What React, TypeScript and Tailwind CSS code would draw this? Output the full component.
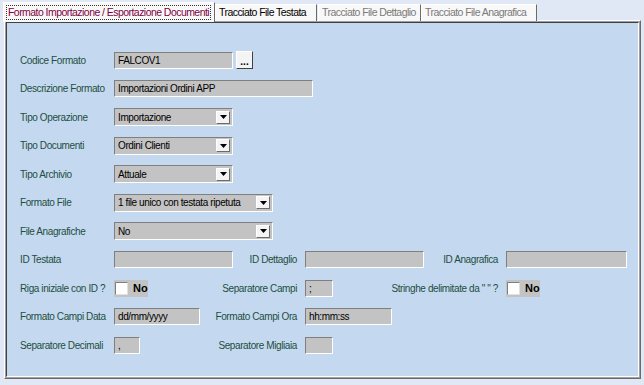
import React from 'react';

const FONT = { fontFamily: '"Liberation Sans", Arial, sans-serif' };

const Label: React.FC<{ text: string; className?: string }> = ({ text, className }) => (
  <span className={`text-[10px] tracking-[-0.4px] text-[#1f4d42] whitespace-nowrap ${className ?? ''}`}>{text}</span>
);

const TextBox: React.FC<{ value?: string; w: string }> = ({ value, w }) => (
  <div
    className={`${w} h-[17px] bg-[#c3c3c3] border border-t-[#7f7f7f] border-l-[#7f7f7f] border-b-white border-r-white px-[3px] text-[10px] tracking-[-0.4px] leading-[15px] text-black whitespace-nowrap overflow-hidden`}
  >
    {value}
  </div>
);

const Combo: React.FC<{ value: string; w: string }> = ({ value, w }) => (
  <div
    className={`${w} h-[18px] bg-[#c3c3c3] border border-t-[#7f7f7f] border-l-[#7f7f7f] border-b-white border-r-white flex items-center`}
  >
    <span className="flex-1 px-[3px] text-[10px] tracking-[-0.4px] leading-[15px] text-black whitespace-nowrap">{value}</span>
    <div className="w-[14px] h-[13px] mr-[2px] bg-[#f4f4f4] border border-t-white border-l-white border-b-[#6b6b6b] border-r-[#6b6b6b] flex items-center justify-center">
      <svg width="7" height="4" viewBox="0 0 7 4">
        <path d="M0 0h7L3.5 4z" fill="#000" />
      </svg>
    </div>
  </div>
);

const CheckNo: React.FC = () => (
  <div className="w-[34px] h-[17px] bg-[#c3c3c3] flex items-center">
    <div className="w-[13px] h-[13px] ml-[1px] bg-white border border-t-[#7f7f7f] border-l-[#7f7f7f] border-b-[#e0e0e0] border-r-[#e0e0e0]" />
    <span className="ml-[5px] text-[11px] font-bold text-black">No</span>
  </div>
);

const Row: React.FC<{ children: React.ReactNode }> = ({ children }) => (
  <div className="h-[28.5px] flex items-center">{children}</div>
);

const tabText = 'text-[10.5px] tracking-[-0.55px] whitespace-nowrap';

const App: React.FC = () => {
  return (
    <div className="w-[644px] h-[385px] bg-[#dfe8f4] pt-[2px] pl-[3px]" style={FONT}>
      {/* tabs */}
      <div className="flex items-start h-[19px] relative z-10">
        <div className="w-[212px] h-[20px] bg-[#f8f8f8] border border-b-0 border-t-white border-l-white border-r-[#6b6b6b] flex items-center px-[2px] overflow-hidden">
          <span className={`border border-dotted border-[#333] px-[1px] leading-[13px] text-[#800040] ${tabText}`}>
            Formato Importazione / Esportazione Documenti
          </span>
        </div>
        <div className={`mt-[2px] w-[102px] h-[17px] bg-[#f8f8f8] border border-b-0 border-t-white border-l-white border-r-[#6b6b6b] flex items-center pl-[3px] text-black ${tabText}`}>
          Tracciato File Testata
        </div>
        <div className={`mt-[2px] ml-[1px] w-[103px] h-[17px] bg-[#f8f8f8] border border-b-0 border-t-white border-l-white border-r-[#6b6b6b] flex items-center pl-[3px] text-[#7a7a7a] ${tabText}`}>
          Tracciato File Dettaglio
        </div>
        <div className={`mt-[2px] w-[116px] h-[17px] bg-[#f8f8f8] border border-b-0 border-t-white border-l-white border-r-[#6b6b6b] flex items-center pl-[3px] text-[#7a7a7a] ${tabText}`}>
          Tracciato File Anagrafica
        </div>
      </div>

      {/* panel */}
      <div className="ml-[1px] -mt-[1px] w-[637px] h-[359px] border border-t-white border-l-white border-b-[#6b6b6b] border-r-[#6b6b6b]">
        <div className="w-full h-full border border-t-[#a0a0a0] border-l-[#a0a0a0] border-b-[#a0a0a0] border-r-[#a0a0a0]">
          <div className="w-full h-full bg-[#c4d9ef] border border-t-[#404040] border-l-[#404040] border-b-white border-r-white pt-[23px] pl-[13px]">
            <Row>
              <Label text="Codice Formato" className="w-[94px]" />
              <TextBox value="FALCOV1" w="w-[119px]" />
              <div className="ml-[3px] w-[17px] h-[18px] bg-[#f4f4f4] border border-t-white border-l-white border-b-[#404040] border-r-[#404040] flex items-end justify-center pb-[3px] text-[10px] leading-[6px] font-bold text-black">
                ...
              </div>
            </Row>
            <Row>
              <Label text="Descrizione Formato" className="w-[94px]" />
              <TextBox value="Importazioni Ordini APP" w="w-[199px]" />
            </Row>
            <Row>
              <Label text="Tipo Operazione" className="w-[94px]" />
              <Combo value="Importazione" w="w-[119px]" />
            </Row>
            <Row>
              <Label text="Tipo Documenti" className="w-[94px]" />
              <Combo value="Ordini Clienti" w="w-[119px]" />
            </Row>
            <Row>
              <Label text="Tipo Archivio" className="w-[94px]" />
              <Combo value="Attuale" w="w-[119px]" />
            </Row>
            <Row>
              <Label text="Formato File" className="w-[94px]" />
              <Combo value="1 file unico con testata ripetuta" w="w-[159px]" />
            </Row>
            <Row>
              <Label text="File Anagrafiche" className="w-[94px]" />
              <Combo value="No" w="w-[159px]" />
            </Row>
            <Row>
              <Label text="ID Testata" className="w-[94px]" />
              <div className="w-[183px] flex items-center justify-between">
                <TextBox w="w-[119px]" />
                <Label text="ID Dettaglio" />
              </div>
              <div className="ml-[8px] w-[193px] flex items-center justify-between">
                <TextBox w="w-[119px]" />
                <Label text="ID Anagrafica" />
              </div>
              <div className="ml-[8px]">
                <TextBox w="w-[121px]" />
              </div>
            </Row>
            <Row>
              <Label text="Riga iniziale con ID ?" className="w-[94px]" />
              <div className="w-[183px] flex items-center justify-between">
                <CheckNo />
                <Label text="Separatore Campi" />
              </div>
              <div className="ml-[8px] w-[193px] flex items-center justify-between">
                <TextBox value=";" w="w-[28px]" />
                <Label text={'Stringhe delimitate da " " ?'} />
              </div>
              <div className="ml-[8px]">
                <CheckNo />
              </div>
            </Row>
            <Row>
              <Label text="Formato Campi Data" className="w-[94px]" />
              <div className="w-[183px] flex items-center justify-between">
                <TextBox value="dd/mm/yyyy" w="w-[86px]" />
                <Label text="Formato Campi Ora" />
              </div>
              <div className="ml-[8px]">
                <TextBox value="hh:mm:ss" w="w-[87px]" />
              </div>
            </Row>
            <Row>
              <Label text="Separatore Decimali" className="w-[94px]" />
              <div className="w-[183px] flex items-center justify-between">
                <TextBox value="," w="w-[26px]" />
                <Label text="Separatore Migliaia" />
              </div>
              <div className="ml-[8px]">
                <TextBox w="w-[28px]" />
              </div>
            </Row>
          </div>
        </div>
      </div>
    </div>
  );
};

export default App;
